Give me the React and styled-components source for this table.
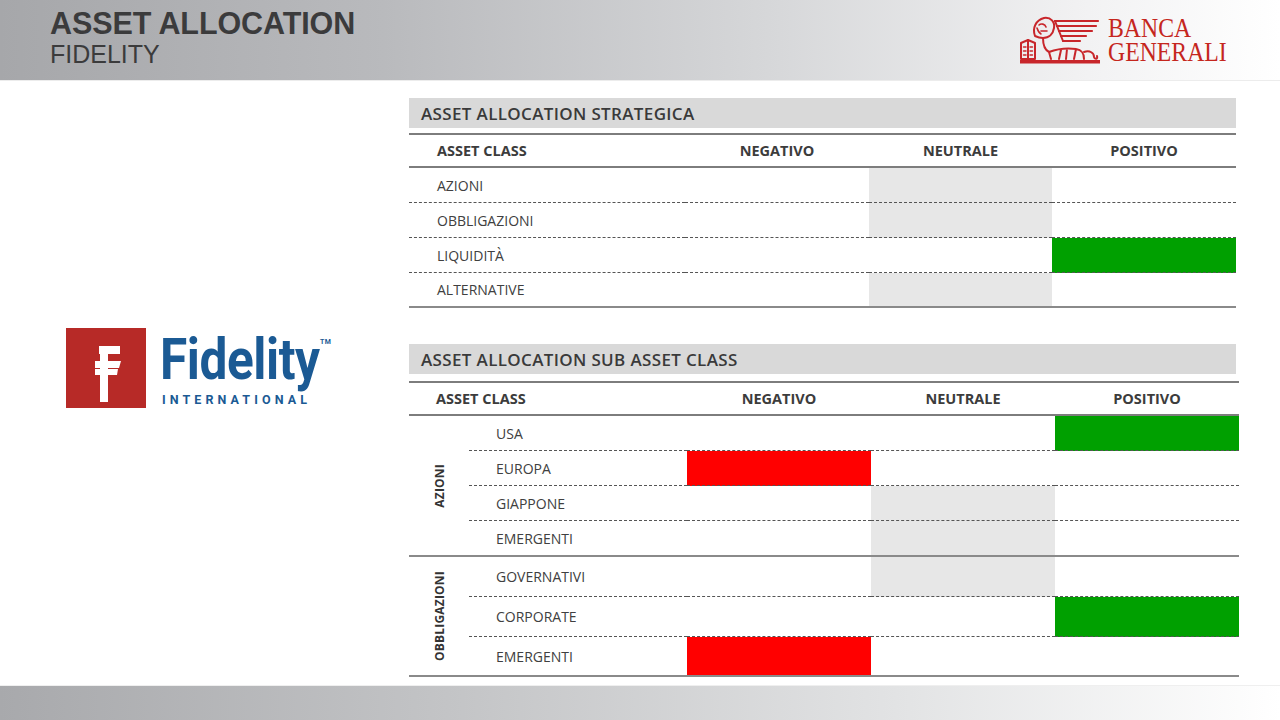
import React from "react";
import styled, { createGlobalStyle } from "styled-components";

const GlobalStyle = createGlobalStyle`
  html, body { margin: 0; padding: 0; background: #fff; }
  body { font-family: "Open Sans", "Liberation Sans", sans-serif; }
`;

const FILLS = {
  neu: "#e7e7e7",
  pos: "#00a000",
  neg: "#ff0000",
};

const Page = styled.div`
  width: 1280px;
  height: 720px;
  display: flex;
  flex-direction: column;
  overflow: hidden;
  background: #fff;
`;

const TopBar = styled.header`
  height: 80px;
  flex-shrink: 0;
  display: flex;
  align-items: flex-start;
  justify-content: space-between;
  padding: 0 52px 0 50px;
  box-sizing: border-box;
  background: linear-gradient(to right, #a6a7aa 0%, #b9babd 30%, #d6d7d9 60%, #f2f2f3 85%, #ffffff 100%);
  box-shadow: 0 1px 0 #ececec;
`;

const TitleBlock = styled.div`
  padding-top: 7px;
  font-family: "Liberation Sans", Arial, sans-serif;
  color: #3b3b3c;
`;

const MainTitle = styled.h1`
  margin: 0;
  font-size: 30.5px;
  line-height: 33px;
  font-weight: 700;
  letter-spacing: -0.1px;
`;

const SubTitle = styled.div`
  font-size: 25px;
  line-height: 29px;
  font-weight: 400;
`;

const Brand = styled.div`
  display: flex;
  align-items: flex-end;
  gap: 8px;
  padding-top: 16px;
`;

const BrandText = styled.div`
  font-family: "Liberation Serif", "Times New Roman", serif;
  color: #c5261d;
  width: 120px;
`;

const BrandLine = styled.div`
  font-size: 27px;
  line-height: 24px;
  height: 24px;
  transform: scaleX(0.88);
  transform-origin: left center;
  white-space: nowrap;
`;

const Main = styled.main`
  flex: 1;
  display: flex;
`;

const Side = styled.aside`
  width: 409px;
  flex-shrink: 0;
  padding: 248px 0 0 66px;
  box-sizing: border-box;
`;

const FidelityLogo = styled.div`
  display: flex;
  align-items: flex-start;
  gap: 14px;
`;

const FidelitySquare = styled.div`
  width: 80px;
  height: 80px;
  background: #b72a27;
  flex-shrink: 0;
`;

const Wordmark = styled.div`
  position: relative;
  padding-top: 4px;
  color: #1b5a94;
  font-family: Roboto, "Liberation Sans", sans-serif;
`;

const WordName = styled.div`
  font-size: 57px;
  font-weight: 700;
  line-height: 56px;
  letter-spacing: -0.5px;
  transform: scaleX(0.87);
  transform-origin: left center;
  width: 170px;
`;

const WordSub = styled.div`
  margin-top: 6px;
  font-size: 12.5px;
  font-weight: 700;
  letter-spacing: 4.1px;
  line-height: 12px;
  padding-left: 2px;
`;

const TradeMark = styled.span`
  position: absolute;
  top: 10px;
  left: 160px;
  font-size: 7px;
  font-weight: 700;
  letter-spacing: 0.3px;
`;

const Content = styled.section`
  padding-top: 18px;
  display: flex;
  flex-direction: column;
  gap: 36px;
`;

const Table = styled.div`
  width: ${(p) => p.$w}px;
  color: #404040;
`;

const TitleBar = styled.div`
  height: 30px;
  width: 827px;
  background: #d9d9d9;
  display: flex;
  align-items: center;
  padding-left: 12px;
  box-sizing: border-box;
  font-size: 17px;
  font-weight: 600;
  letter-spacing: 0.35px;
  color: #3a3a3a;
  margin-bottom: ${(p) => p.$gap}px;
`;

const HeadRow = styled.div`
  display: grid;
  grid-template-columns: ${(p) => p.$cols};
  height: 35px;
  border-top: 2px solid #7d7d7d;
  border-bottom: 2px solid #7d7d7d;
  box-sizing: border-box;
  font-size: 14.5px;
  font-weight: 700;
  color: #3c3c3c;
`;

const HeadCell = styled.div`
  display: flex;
  align-items: center;
  white-space: nowrap;
  justify-content: ${(p) => (p.$center ? "center" : "flex-start")};
  padding-left: ${(p) => p.$pad || 0}px;
`;

const Row = styled.div`
  display: grid;
  grid-template-columns: ${(p) => p.$cols};
  height: ${(p) => p.$h}px;
  font-size: 14px;
`;

const Cell = styled.div`
  display: flex;
  align-items: center;
  padding-left: ${(p) => p.$pad || 0}px;
  background: ${(p) => FILLS[p.$fill] || "transparent"};
  border-bottom: ${(p) =>
    p.$line === "solid"
      ? "2px solid #8a8a8a"
      : p.$line === "dashed"
      ? "1px dashed #555"
      : "none"};
`;

const Group = styled.div`
  display: grid;
  grid-template-columns: 60px 1fr;
  border-bottom: 2px solid #8a8a8a;
`;

const GroupLabel = styled.div`
  display: flex;
  align-items: center;
  justify-content: center;
  span {
    writing-mode: vertical-rl;
    transform: rotate(180deg);
    font-size: 12px;
    font-weight: 700;
    color: #333;
    letter-spacing: 0.2px;
  }
`;

const Footer = styled.footer`
  height: 34px;
  flex-shrink: 0;
  background: linear-gradient(to right, #a8a9ac 0%, #c3c4c6 35%, #e2e3e4 70%, #ffffff 100%);
  box-shadow: 0 -1px 0 #efefef;
`;

const LionMark = () => (
  <svg width="80" height="48" viewBox="0 0 80 48" fill="none" stroke="#c8262b" strokeWidth="2" strokeLinecap="round" strokeLinejoin="round">
    <rect x="0" y="44" width="80" height="3.5" fill="#c8262b" stroke="none" />
    <path d="M1 27 L8 24 L15 27 V43 H1 Z" />
    <path d="M8 24 V43" />
    <path d="M3.5 31 H6 M3.5 35 H6 M3.5 39 H6 M10 31 H12.5 M10 35 H12.5 M10 39 H12.5" strokeWidth="1.4" />
    <path d="M15 20 C12 12 16 4 24 2 C31 1 35 6 34 12 C33 18 29 22 23 22 C20 22 17 21 15 20 Z" />
    <path d="M19 9 C21 7 25 8 26 11 M21 15 H27 M17 12 C18 15 19 17 21 18" strokeWidth="1.6" />
    <path d="M35 5 H78 M37 10 H76 M39 15 H72 M41 20 H66 M43 25 H60" strokeWidth="2.2" />
    <path d="M35 5 L43 25" strokeWidth="2" />
    <path d="M23 22 C23 30 25 34 29 36 L31 43 M29 36 C37 33 48 32 56 33 C62 34 64 37 64 43 M41 34 L39 43 M47 33 L46 43 M56 33 L54 43" />
    <path d="M64 36 C70 34 74 37 74 41 C75 44 78 43 77 40" />
  </svg>
);

const FidelityMark = () => (
  <FidelitySquare>
    <svg width="80" height="80" viewBox="0 0 80 80">
      <path
        d="M33 18 H54 V26 H42 V33 H55 L53 40 H42 V41 H52 L51 47 H42 V74 H34 V47 H29 V41 H34 V40 H29 V33 H34 V26 H33 Z"
        fill="#fff"
      />
    </svg>
  </FidelitySquare>
);

const COLS1 = "276px 184px 183px 184px";
const COLS2 = "218px 184px 184px 184px";
const COLS2_HEAD = "278px 184px 184px 184px";

const strategic = [
  { name: "AZIONI", fill: "neu" },
  { name: "OBBLIGAZIONI", fill: "neu" },
  { name: "LIQUIDITÀ", fill: "pos" },
  { name: "ALTERNATIVE", fill: "neu" },
];

const groups = [
  {
    label: "AZIONI",
    h: 35,
    trim: 1,
    rows: [
      { name: "USA", fill: "pos" },
      { name: "EUROPA", fill: "neg" },
      { name: "GIAPPONE", fill: "neu" },
      { name: "EMERGENTI", fill: "neu" },
    ],
  },
  {
    label: "OBBLIGAZIONI",
    h: 40,
    trim: 2,
    rows: [
      { name: "GOVERNATIVI", fill: "neu" },
      { name: "CORPORATE", fill: "pos" },
      { name: "EMERGENTI", fill: "neg" },
    ],
  },
];

const ValueCells = ({ fill, line }) =>
  ["neg", "neu", "pos"].map((k) => (
    <Cell key={k} $line={line} $fill={fill === k ? k : undefined} />
  ));

const App = () => {
  return (
    <Page>
      <GlobalStyle />
      <TopBar>
        <TitleBlock>
          <MainTitle>ASSET ALLOCATION</MainTitle>
          <SubTitle>FIDELITY</SubTitle>
        </TitleBlock>
        <Brand>
          <LionMark />
          <BrandText>
            <BrandLine>BANCA</BrandLine>
            <BrandLine>GENERALI</BrandLine>
          </BrandText>
        </Brand>
      </TopBar>

      <Main>
        <Side>
          <FidelityLogo>
            <FidelityMark />
            <Wordmark>
              <WordName>Fidelity</WordName>
              <WordSub>INTERNATIONAL</WordSub>
              <TradeMark>TM</TradeMark>
            </Wordmark>
          </FidelityLogo>
        </Side>

        <Content>
          <Table $w={827}>
            <TitleBar $gap={5}>ASSET ALLOCATION STRATEGICA</TitleBar>
            <HeadRow $cols={COLS1}>
              <HeadCell $pad={28}>ASSET CLASS</HeadCell>
              <HeadCell $center>NEGATIVO</HeadCell>
              <HeadCell $center>NEUTRALE</HeadCell>
              <HeadCell $center>POSITIVO</HeadCell>
            </HeadRow>
            {strategic.map((r, i) => {
              const line = i === strategic.length - 1 ? "solid" : "dashed";
              return (
                <Row key={r.name} $cols={COLS1} $h={35}>
                  <Cell $pad={28} $line={line}>{r.name}</Cell>
                  <ValueCells fill={r.fill} line={line} />
                </Row>
              );
            })}
          </Table>

          <Table $w={830}>
            <TitleBar $gap={7}>ASSET ALLOCATION SUB ASSET CLASS</TitleBar>
            <HeadRow $cols={COLS2_HEAD}>
              <HeadCell $pad={27}>ASSET CLASS</HeadCell>
              <HeadCell $center>NEGATIVO</HeadCell>
              <HeadCell $center>NEUTRALE</HeadCell>
              <HeadCell $center>POSITIVO</HeadCell>
            </HeadRow>
            {groups.map((g) => (
              <Group key={g.label}>
                <GroupLabel>
                  <span>{g.label}</span>
                </GroupLabel>
                <div>
                  {g.rows.map((r, i) => {
                    const last = i === g.rows.length - 1;
                    const line = last ? "none" : "dashed";
                    return (
                      <Row key={r.name} $cols={COLS2} $h={last ? g.h - g.trim : g.h}>
                        <Cell $pad={27} $line={line}>{r.name}</Cell>
                        <ValueCells fill={r.fill} line={line} />
                      </Row>
                    );
                  })}
                </div>
              </Group>
            ))}
          </Table>
        </Content>
      </Main>

      <Footer />
    </Page>
  );
};

export default App;
